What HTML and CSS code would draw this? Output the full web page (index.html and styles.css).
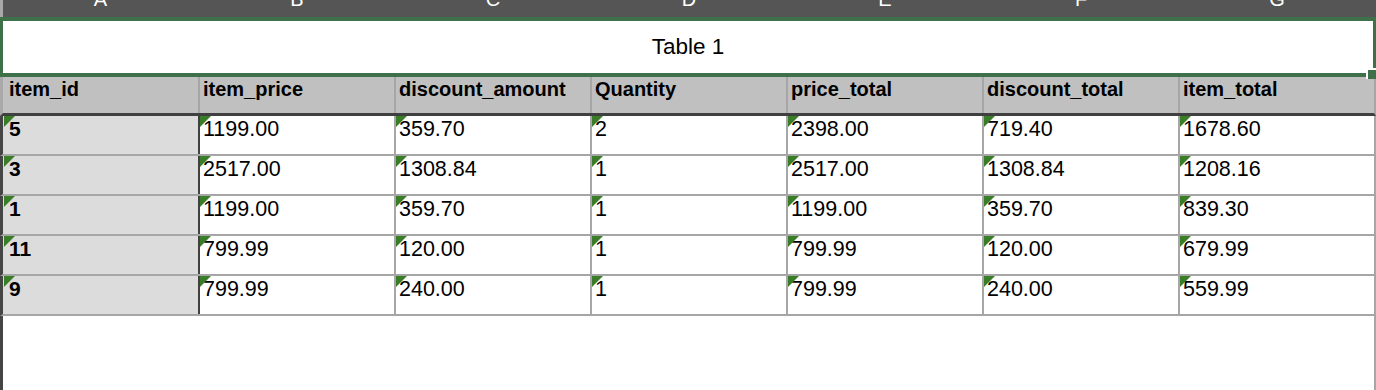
FILE: index.html
```html
<!DOCTYPE html>
<html lang="en">
<head>
<meta charset="utf-8">
<title>Table 1</title>
<link rel="stylesheet" href="styles.css">
</head>
<body>
<div class="page">
  <div class="colbar">
    <span class="collabel">A</span>
    <span class="collabel">B</span>
    <span class="collabel">C</span>
    <span class="collabel">D</span>
    <span class="collabel">E</span>
    <span class="collabel">F</span>
    <span class="collabel">G</span>
  </div>
  <div class="title">
    <span class="title-text">Table 1</span>
    <span class="handle"></span>
  </div>
  <div class="row head">
    <div class="cell">item_id</div>
    <div class="cell">item_price</div>
    <div class="cell">discount_amount</div>
    <div class="cell">Quantity</div>
    <div class="cell">price_total</div>
    <div class="cell">discount_total</div>
    <div class="cell">item_total</div>
  </div>
  <div class="row data">
    <div class="cell key">5</div>
    <div class="cell">1199.00</div>
    <div class="cell">359.70</div>
    <div class="cell">2</div>
    <div class="cell">2398.00</div>
    <div class="cell">719.40</div>
    <div class="cell">1678.60</div>
  </div>
  <div class="row data">
    <div class="cell key">3</div>
    <div class="cell">2517.00</div>
    <div class="cell">1308.84</div>
    <div class="cell">1</div>
    <div class="cell">2517.00</div>
    <div class="cell">1308.84</div>
    <div class="cell">1208.16</div>
  </div>
  <div class="row data">
    <div class="cell key">1</div>
    <div class="cell">1199.00</div>
    <div class="cell">359.70</div>
    <div class="cell">1</div>
    <div class="cell">1199.00</div>
    <div class="cell">359.70</div>
    <div class="cell">839.30</div>
  </div>
  <div class="row data">
    <div class="cell key">11</div>
    <div class="cell">799.99</div>
    <div class="cell">120.00</div>
    <div class="cell">1</div>
    <div class="cell">799.99</div>
    <div class="cell">120.00</div>
    <div class="cell">679.99</div>
  </div>
  <div class="row data">
    <div class="cell key">9</div>
    <div class="cell">799.99</div>
    <div class="cell">240.00</div>
    <div class="cell">1</div>
    <div class="cell">799.99</div>
    <div class="cell">240.00</div>
    <div class="cell">559.99</div>
  </div>
  <div class="filler"></div>
</div>
</body>
</html>
```
FILE: styles.css
```css
html, body {
  margin: 0;
  padding: 0;
  background: #ffffff;
}

.page {
  width: 1376px;
  height: 390px;
  overflow: hidden;
  font-family: "Liberation Sans", Arial, Helvetica, sans-serif;
  color: #000;
  display: flex;
  flex-direction: column;
}

/* column letter bar */
.colbar {
  height: 17px;
  flex: none;
  background: #555555;
  border-left: 3px solid #a9a9a9;
  display: grid;
  grid-template-columns: 195px repeat(6, 196px) 2px;
  overflow: hidden;
  box-sizing: border-box;
}

.collabel {
  display: block;
  text-align: center;
  color: #ffffff;
  font-size: 20px;
  line-height: 17px;
  margin-top: -9px;
}

.collabel + .collabel {
  padding-left: 2px;
}

/* title cell (selected) */
.title {
  position: relative;
  flex: none;
  height: 60px;
  box-sizing: border-box;
  border-top: 4px solid #3e704a;
  border-bottom: 4px solid #3e704a;
  border-left: 3px solid #3e704a;
  border-right: 3px solid #3e704a;
  display: flex;
  align-items: center;
  justify-content: center;
}

.title-text {
  font-size: 22.5px;
}

.handle {
  position: absolute;
  right: -3px;
  bottom: -6px;
  width: 8px;
  height: 9px;
  background: #3e704a;
  border-left: 2px solid #ffffff;
  border-top: 2px solid #ffffff;
}

/* rows */
.row {
  flex: none;
  display: grid;
  grid-template-columns: 195px repeat(6, 196px);
  border-right: 2px solid #a6a6a6;
}

.cell {
  position: relative;
  box-sizing: border-box;
  padding-left: 3px;
  white-space: nowrap;
  overflow: hidden;
}

.row .cell:first-child {
  padding-left: 6px;
}

.head {
  height: 39px;
  box-sizing: border-box;
  background: #bfc0bf;
  border-left: 3px solid #a9a9a9;
  border-bottom: 3px solid #404040;
}

.head .cell {
  font-size: 20px;
  font-weight: bold;
  line-height: 23px;
  padding-top: 1px;
}

.head .cell + .cell {
  border-left: 2px solid #a6a6a6;
}

.data {
  height: 40px;
  box-sizing: border-box;
  border-left: 3px solid #454545;
  border-bottom: 2px solid #a6a6a6;
}

.data .cell {
  font-size: 21.5px;
  line-height: 24px;
  padding-top: 1px;
}

.data .cell + .cell {
  border-left: 2px solid #a6a6a6;
}

.data .cell:nth-child(2) {
  border-left-color: #404040;
}

.data .key {
  background: #dcdcdc;
  font-weight: bold;
  font-size: 21px;
}

.data .cell::before {
  content: "";
  position: absolute;
  top: 0;
  left: 0;
  width: 0;
  height: 0;
  border-top: 11px solid #3a7d28;
  border-right: 11px solid transparent;
}

.data .key::before {
  left: 1px;
}

.filler {
  flex: 1;
  border-left: 3px solid #454545;
  border-right: 2px solid #a6a6a6;
}
```
